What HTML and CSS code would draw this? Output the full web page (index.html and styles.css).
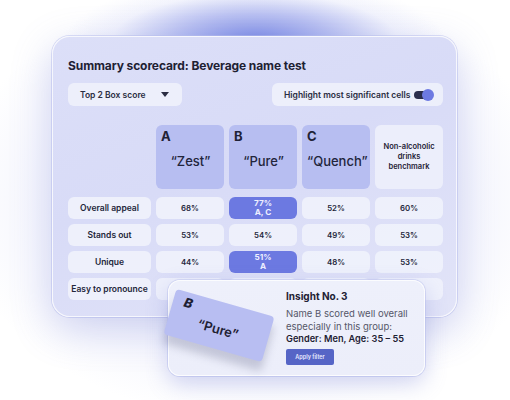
FILE: index.html
```html
<!DOCTYPE html>
<html>
<head>
<meta charset="utf-8">
<link rel="stylesheet" href="styles.css">
</head>
<body>
<div class="stage">
  <div class="glow"></div>
  <div class="card">
    <h1 class="title">Summary scorecard: Beverage name test</h1>
    <div class="controls">
      <div class="dropdown"><span>Top 2 Box score</span><span class="caret"></span></div>
      <div class="toggle-box"><span>Highlight most significant cells</span><span class="switch"><span class="knob"></span></span></div>
    </div>
    <div class="table">
      <div class="corner"></div>
      <div class="head"><span class="letter">A</span><span class="name">“Zest”</span></div>
      <div class="head"><span class="letter">B</span><span class="name">“Pure”</span></div>
      <div class="head"><span class="letter">C</span><span class="name">“Quench”</span></div>
      <div class="head bench">Non-alcoholic drinks benchmark</div>

      <div class="label">Overall appeal</div>
      <div class="cell">68%</div>
      <div class="cell hi">77%<br>A, C</div>
      <div class="cell">52%</div>
      <div class="cell">60%</div>

      <div class="label">Stands out</div>
      <div class="cell">53%</div>
      <div class="cell">54%</div>
      <div class="cell">49%</div>
      <div class="cell">53%</div>

      <div class="label">Unique</div>
      <div class="cell">44%</div>
      <div class="cell hi">51%<br>A</div>
      <div class="cell">48%</div>
      <div class="cell">53%</div>

      <div class="label">Easy to pronounce</div>
      <div class="cell"></div>
      <div class="cell"></div>
      <div class="cell"></div>
      <div class="cell"></div>
    </div>
  </div>

  <div class="insight">
    <div class="tilt">
      <span class="tilt-letter">B</span>
      <span class="tilt-name">“Pure”</span>
    </div>
    <div class="insight-body">
      <div class="insight-title">Insight No. 3</div>
      <p class="insight-text">Name B scored well overall especially in this group:</p>
      <p class="insight-group">Gender: Men, Age: 35 – 55</p>
      <button class="apply">Apply filter</button>
    </div>
  </div>
</div>
</body>
</html>
```

FILE: styles.css
```css
* { box-sizing: border-box; }
html, body { margin: 0; padding: 0; }
body {
  width: 510px;
  height: 400px;
  overflow: hidden;
  background: #ffffff;
  font-family: Inter, "Noto Sans", sans-serif;
  color: #1f2236;
}
.stage {
  position: relative;
  width: 510px;
  height: 400px;
  padding: 36px 0 0 52px;
}
.glow {
  position: absolute;
  left: 0; top: 0;
  width: 510px; height: 400px;
  background:
    radial-gradient(ellipse 190px 62px at 255px 40px, rgba(118,134,228,0.95) 0%, rgba(140,152,232,0.6) 40%, rgba(200,206,245,0.2) 75%, rgba(255,255,255,0) 100%),
    radial-gradient(ellipse 300px 220px at 255px 200px, rgba(170,178,238,0.45) 0%, rgba(200,205,245,0.25) 60%, rgba(255,255,255,0) 100%);
}
.card {
  position: relative;
  width: 405px;
  height: 281px;
  border-radius: 18px;
  padding: 21px 15px 0 15px;
  background: linear-gradient(160deg, #dcdff8 0%, #d8dbf7 45%, #e2e4f8 100%);
  border: 1px solid rgba(255,255,255,0.75);
  box-shadow: 0 12px 40px rgba(110,120,210,0.30), 0 0 0 1px rgba(190,196,240,0.5);
}
.title {
  margin: 0;
  font-size: 12px;
  line-height: 16px;
  font-weight: 700;
  color: #1e2133;
  letter-spacing: -0.1px;
}
.controls {
  display: flex;
  justify-content: space-between;
  margin-top: 9px;
  width: 375px;
}
.dropdown, .toggle-box {
  height: 23px;
  border-radius: 6px;
  background: rgba(240,242,252,0.85);
  display: flex;
  align-items: center;
  justify-content: space-between;
  font-size: 8.5px;
  font-weight: 600;
  color: #2a2d42;
}
.dropdown { width: 114px; padding: 0 13px 0 12px; }
.caret {
  width: 0; height: 0;
  border-left: 4.5px solid transparent;
  border-right: 4.5px solid transparent;
  border-top: 5.5px solid #2a2d42;
}
.toggle-box { width: 171px; padding: 0 11px 0 12px; }
.switch {
  position: relative;
  width: 18px; height: 8px;
  border-radius: 4px;
  background: #2b2e4d;
}
.knob {
  position: absolute;
  right: -2px; top: -2px;
  width: 12px; height: 12px;
  border-radius: 50%;
  background: #6d7ae2;
}
.table {
  margin-top: 19px;
  display: grid;
  grid-template-columns: 83px repeat(4, 68px);
  grid-template-rows: 67px repeat(4, 22px);
  column-gap: 5px;
  row-gap: 5px;
}
.table .corner { grid-row: 1; }
.head {
  border-radius: 6px;
  background: #b7bef1;
  display: flex;
  flex-direction: column;
  padding: 3px 4px 0 5px;
  margin-bottom: 3px;
}
.head .letter {
  font-size: 13px;
  font-weight: 700;
  line-height: 16px;
  color: #1f2236;
}
.head .name {
  margin-top: 9px;
  text-align: center;
  font-size: 13px;
  line-height: 16px;
  font-weight: 500;
  color: #22253b;
}
.head.bench {
  background: #eceefb;
  align-items: center;
  justify-content: center;
  text-align: center;
  padding: 0 6px;
  font-size: 7.5px;
  font-weight: 600;
  line-height: 10px;
  color: #1f2236;
}
.label, .cell {
  border-radius: 6px;
  background: rgba(240,242,252,0.88);
  display: flex;
  align-items: center;
  justify-content: center;
  text-align: center;
  font-size: 8px;
  font-weight: 600;
  color: #23263a;
}
.label { font-size: 8.5px; }
.cell { font-size: 7.8px; }
.cell.hi {
  background: #6c79e1;
  color: #eef0ff;
  font-size: 8.2px;
  font-weight: 700;
  line-height: 9px;
}
.insight {
  position: absolute;
  left: 168px;
  top: 280px;
  width: 257px;
  height: 96px;
  border-radius: 12px;
  background: linear-gradient(180deg, #eef0fb 0%, #eceefa 100%);
  border: 1px solid rgba(255,255,255,0.8);
  box-shadow: 0 8px 22px rgba(110,120,210,0.30), 0 0 0 1px rgba(200,205,242,0.6);
}
.tilt {
  position: absolute;
  left: -1px;
  top: 21px;
  width: 102px;
  height: 47px;
  border-radius: 4px;
  background: #b8bef2;
  transform: rotate(16deg);
  box-shadow: 2px 9px 8px rgba(90,95,130,0.28);
}
.tilt-letter {
  position: absolute;
  left: 11px; top: 2px;
  font-size: 13px;
  font-weight: 800;
  font-style: italic;
  color: #1e2133;
}
.tilt-name {
  position: absolute;
  left: 0; right: 0;
  top: 19px;
  text-align: center;
  font-size: 13px;
  font-weight: 600;
  color: #1e2133;
}
.insight-body {
  padding: 9px 0 0 117px;
}
.insight-title {
  font-size: 10px;
  font-weight: 700;
  line-height: 13px;
  color: #1e2133;
}
.insight-text {
  margin: 5px 0 0 0;
  font-size: 9.5px;
  line-height: 12.5px;
  color: #555769;
  width: 125px;
}
.insight-group {
  margin: 0;
  font-size: 9.2px;
  line-height: 12.5px;
  font-weight: 600;
  color: #1e2133;
}
.apply {
  display: block;
  margin-top: 3px;
  width: 48px;
  height: 16px;
  border: none;
  border-radius: 2px;
  background: #5665c6;
  color: #e8eaff;
  font-family: inherit;
  font-size: 5.5px;
  font-weight: 600;
  padding: 0;
}
```
